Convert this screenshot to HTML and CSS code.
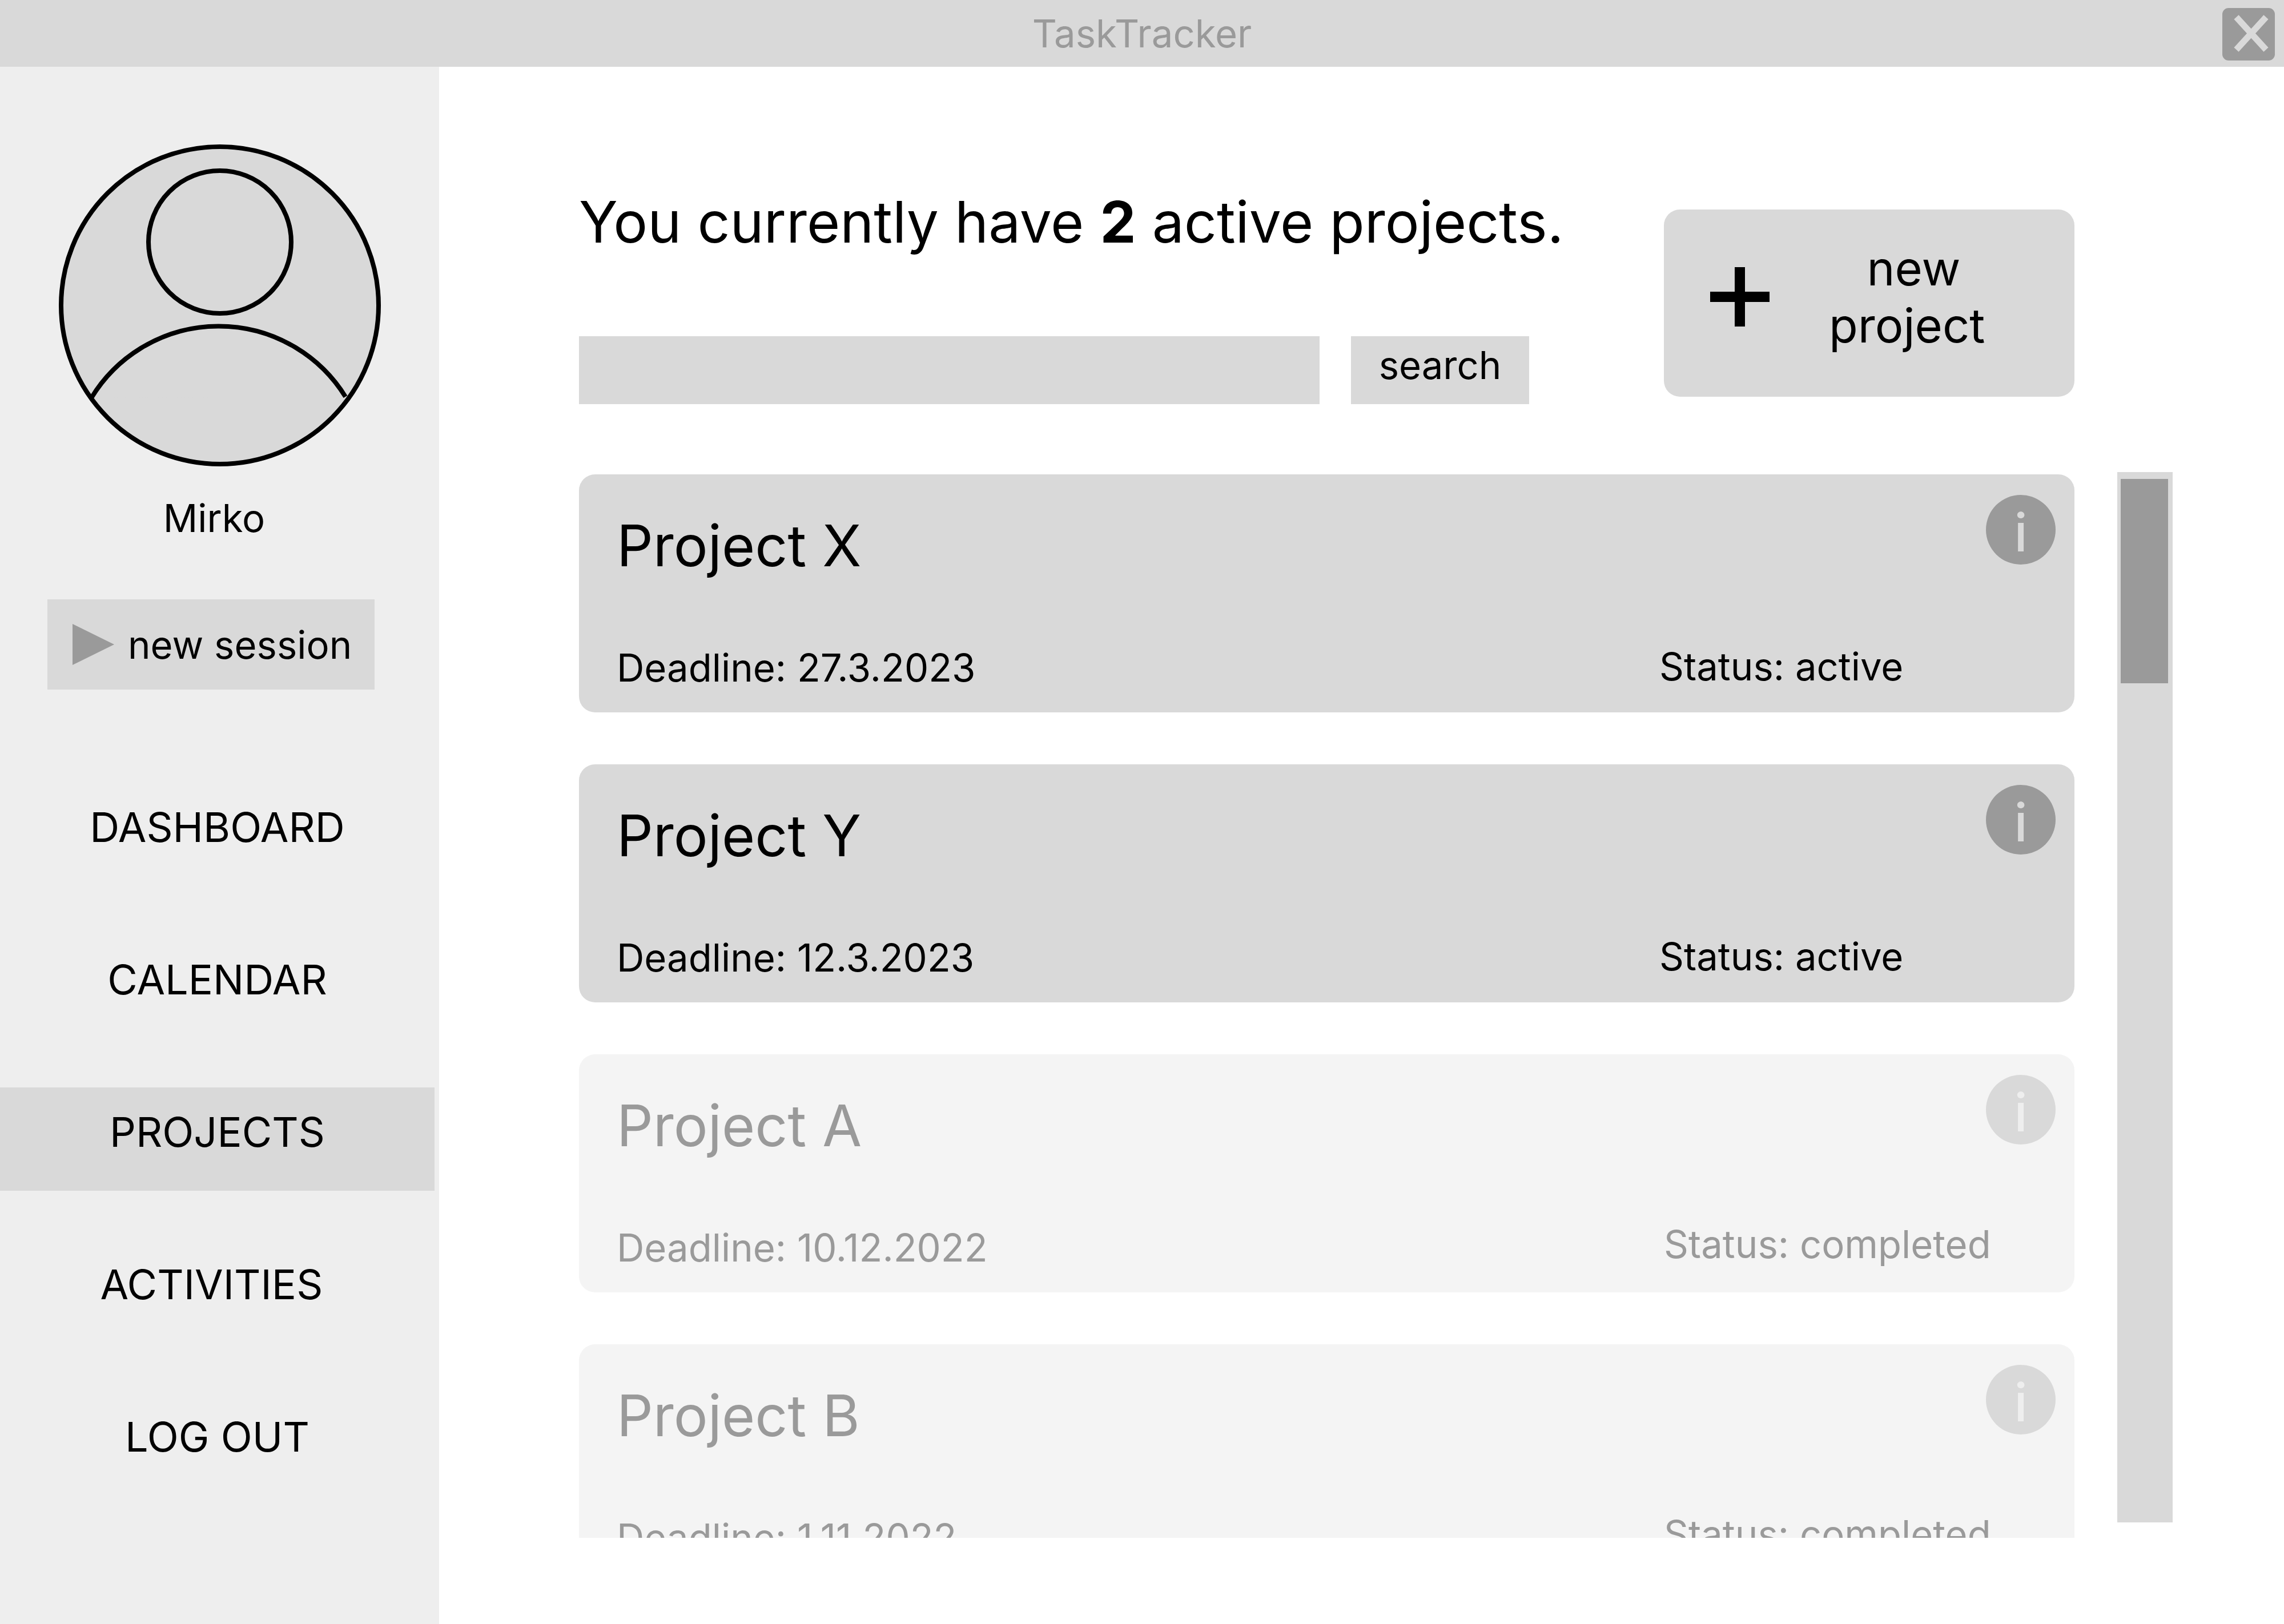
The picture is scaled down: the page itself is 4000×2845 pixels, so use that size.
FILE: index.html
```html
<!DOCTYPE html>
<html lang="en">
<head>
<meta charset="utf-8">
<meta name="viewport" content="width=device-width, initial-scale=1">
<title>TaskTracker</title>
<link rel="stylesheet" href="styles.css">
</head>
<body>
<div class="app">
  <header class="titlebar">
    <h1 class="titlebar-name">TaskTracker</h1>
    <button class="close" type="button" aria-label="Close">
      <svg class="close-icon" viewBox="0 0 92 92" aria-hidden="true"><path d="M24.5 16L76.5 73M76.5 16L24.5 73"/></svg>
    </button>
  </header>

  <aside class="sidebar">
    <div class="profile">
      <svg class="avatar" viewBox="0 0 564 564" aria-hidden="true">
        <circle cx="282" cy="282" r="278"/>
        <circle cx="282" cy="171" r="125"/>
        <path d="M57 444A261 261 0 0 1 502 442"/>
      </svg>
      <p class="profile-name">Mirko</p>
    </div>
    <button class="session" type="button">
      <svg class="session-icon" viewBox="0 0 73 72" aria-hidden="true"><path d="M0 0L73 36L0 72Z"/></svg>
      new session
    </button>
    <nav class="nav">
      <a class="nav-link" href="#dashboard">DASHBOARD</a>
      <a class="nav-link" href="#calendar">CALENDAR</a>
      <a class="nav-link nav-link-current" href="#projects" aria-current="page">PROJECTS</a>
      <a class="nav-link" href="#activities">ACTIVITIES&nbsp;</a>
      <a class="nav-link" href="#logout">LOG OUT</a>
    </nav>
  </aside>

  <main class="main">
    <div class="toolbar">
      <div class="summary">
        <h2 class="summary-title">You currently have <strong>2</strong> active projects.</h2>
        <form class="search">
          <input class="search-input" type="text" aria-label="Search projects">
          <button class="search-button" type="submit">search</button>
        </form>
      </div>
      <button class="new-project" type="button">
        <svg class="plus" viewBox="0 0 104 104" aria-hidden="true"><path d="M0 52H104M52 0V104"/></svg>
        <span class="new-project-label">&nbsp;new<br>project</span>
      </button>
    </div>

    <div class="projects">
      <div class="project-list">
        <article class="card">
          <h3 class="card-title">Project X</h3>
          <button class="info" type="button" aria-label="About Project X">i</button>
          <p class="card-deadline">Deadline: 27.3.2023</p>
          <p class="card-status">Status: active</p>
        </article>
        <article class="card">
          <h3 class="card-title">Project Y</h3>
          <button class="info" type="button" aria-label="About Project Y">i</button>
          <p class="card-deadline">Deadline: 12.3.2023</p>
          <p class="card-status">Status: active</p>
        </article>
        <article class="card card-completed">
          <h3 class="card-title">Project A</h3>
          <button class="info" type="button" aria-label="About Project A">i</button>
          <p class="card-deadline">Deadline: 10.12.2022</p>
          <p class="card-status">Status: completed</p>
        </article>
        <article class="card card-completed">
          <h3 class="card-title">Project B</h3>
          <button class="info" type="button" aria-label="About Project B">i</button>
          <p class="card-deadline">Deadline: 1.11.2022</p>
          <p class="card-status">Status: completed</p>
        </article>
      </div>
      <div class="scrollbar" aria-hidden="true"><div class="scrollbar-thumb"></div></div>
    </div>
  </main>
</div>
</body>
</html>
```
FILE: styles.css
```css
:root {
  --ink: #000;
  --panel: #d9d9d9;
  --panel-light: #eee;
  --muted: #9a9a9a;
}

* {
  box-sizing: border-box;
  margin: 0;
  padding: 0;
}

body {
  background: #fff;
  color: var(--ink);
  font: 400 67px/81px Inter, "Liberation Sans", sans-serif;
  font-optical-sizing: none;
}

button,
input {
  border: 0;
  background: var(--panel);
  color: inherit;
  font: inherit;
}

.app {
  display: grid;
  grid-template: auto minmax(0, 1fr) / 769px minmax(0, 1fr);
  height: 100vh;
}

/* Title bar */
.titlebar {
  grid-column: 1 / -1;
  display: grid;
  grid-template-columns: 1fr auto 1fr;
  align-items: center;
  height: 117px;
  padding-right: 16px;
  padding-left: 16px;
  background: var(--panel);
}

.titlebar-name {
  grid-column: 2;
  color: var(--muted);
  font-size: 67px;
  font-weight: 400;
}

.close {
  justify-self: end;
  width: 92px;
  height: 92px;
  margin-top: 3px;
  border-radius: 11px;
  background: var(--muted);
}

.close-icon {
  display: block;
  fill: none;
  stroke: var(--panel);
  stroke-width: 11;
}

/* Sidebar */
.sidebar {
  display: flex;
  flex-direction: column;
  padding-top: 136px;
  background: var(--panel-light);
}

.profile {
  display: flex;
  flex-direction: column;
  gap: 50px;
  width: 564px;
  margin-left: 103px;
}

.avatar {
  display: block;
  width: 564px;
  height: 564px;
  fill: var(--panel);
  stroke: var(--ink);
  stroke-width: 8;
}

.profile-name {
  padding-right: 20px;
  text-align: center;
}

.session {
  display: flex;
  align-items: center;
  align-self: flex-start;
  gap: 24px;
  height: 158px;
  margin: 102px 0 0 83px;
  padding: 0 40px 0 44px;
  white-space: nowrap;
}

.session-icon {
  width: 73px;
  height: 72px;
  fill: var(--muted);
}

.nav {
  display: flex;
  flex-direction: column;
  gap: 86px;
  margin: 163px 8px 0 0;
}

.nav-link {
  padding: 34px 0 60px;
  color: inherit;
  font-size: 72px;
  line-height: 87px;
  text-align: center;
  text-decoration: none;
}

.nav-link-current {
  background: var(--panel);
}

/* Main area */
.main {
  display: flex;
  flex-direction: column;
  gap: 119px;
  min-height: 0;
  padding: 211px 195px 151px 245px;
}

.toolbar {
  display: flex;
  align-items: flex-start;
  gap: 236px;
  margin-right: 172px;
}

.summary {
  display: flex;
  flex: 1;
  flex-direction: column;
  gap: 140px;
  min-width: 0;
}

.summary-title {
  font-size: 100px;
  font-weight: 400;
  line-height: 121px;
  white-space: nowrap;
}

.search {
  display: flex;
  gap: 55px;
  height: 119px;
}

.search-input {
  flex: 1;
  min-width: 0;
  padding: 0 32px;
}

.search-button {
  width: 312px;
  padding-bottom: 18px;
}

.new-project {
  display: flex;
  flex: none;
  align-items: center;
  gap: 104px;
  width: 719px;
  height: 328px;
  margin-top: 39px;
  padding: 0 81px 22px;
  border-radius: 28px;
  font-size: 83px;
  line-height: 100px;
}

.plus {
  width: 104px;
  height: 104px;
  stroke: var(--ink);
  stroke-width: 18;
}

/* Project list */
.projects {
  display: flex;
  flex: 1;
  gap: 75px;
  min-height: 0;
}

.project-list {
  display: flex;
  flex: 1;
  flex-direction: column;
  gap: 91px;
  padding-top: 4px;
  overflow: hidden;
}

.card {
  display: grid;
  flex: none;
  grid-template: 1fr auto / 1fr 572px 122px;
  height: 417px;
  padding: 36px 33px 38px 66px;
  border-radius: 28px;
  background: var(--panel);
}

.card-title {
  grid-column: 1 / 3;
  padding-top: 28px;
  font-size: 100px;
  font-weight: 400;
  line-height: 121px;
}

.info {
  width: 122px;
  height: 122px;
  padding-top: 10px;
  border-radius: 50%;
  background: var(--muted);
  color: var(--panel);
  font-size: 92px;
  font-weight: 500;
  line-height: 112px;
}

.card-deadline {
  align-self: end;
}

.card-status {
  grid-column: 2 / 4;
  align-self: end;
  padding-bottom: 2px;
}

.card-completed {
  background: #f4f4f4;
  color: var(--muted);
}

.card-completed .info {
  background: var(--panel);
  color: var(--panel-light);
}

.card-completed .card-status {
  padding: 0 0 6px 8px;
}

.scrollbar {
  width: 97px;
  margin-bottom: 27px;
  padding: 12px 8px 0 6px;
  background: var(--panel);
}

.scrollbar-thumb {
  height: 358px;
  background: var(--muted);
}
```
